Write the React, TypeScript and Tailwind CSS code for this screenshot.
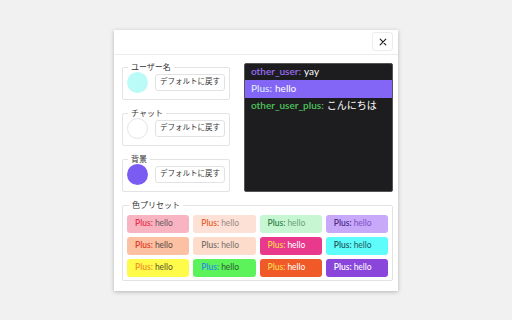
import React from 'react';

const presets = [
  { bg: 'bg-[#f8b4c0]', name: 'text-[#e8304f]', msg: 'text-[#6b5560]' },
  { bg: 'bg-[#fde0d6]', name: 'text-[#e8602c]', msg: 'text-[#9a8a86]' },
  { bg: 'bg-[#c7f7d2]', name: 'text-[#2f7f49]', msg: 'text-[#6ba27e]' },
  { bg: 'bg-[#c8a8f8]', name: 'text-[#4b2b8a]', msg: 'text-[#7a52c8]' },
  { bg: 'bg-[#fcc0a2]', name: 'text-[#e23a2a]', msg: 'text-[#5b4a44]' },
  { bg: 'bg-[#fddccb]', name: 'text-[#7c706b]', msg: 'text-[#7c706b]' },
  { bg: 'bg-[#e8398d]', name: 'text-[#ffd54a]', msg: 'text-white' },
  { bg: 'bg-[#5ffcfc]', name: 'text-[#1f5a5e]', msg: 'text-[#1f5a5e]' },
  { bg: 'bg-[#fffb4a]', name: 'text-[#f0902c]', msg: 'text-[#5a5330]' },
  { bg: 'bg-[#5cf25a]', name: 'text-[#2c8be0]', msg: 'text-[#2e5a2e]' },
  { bg: 'bg-[#f05a28]', name: 'text-[#ffd54a]', msg: 'text-white' },
  { bg: 'bg-[#8a45db]', name: 'text-white', msg: 'text-white' },
];

const ColorField = ({ label, swatch }: { label: string; swatch: string }) => (
  <fieldset className="border border-[#e3e3e3] rounded-[2px] px-[4px] pb-[6px]">
    <legend className="px-[3px] ml-[1px] text-[8px] leading-[9px] text-[#333]">{label}</legend>
    <div className="flex items-center gap-[7px]">
      <div className={`w-[21px] h-[21px] rounded-full ${swatch}`} />
      <button className="whitespace-nowrap border border-[#e2e2e2] rounded-[3px] bg-white px-[4px] h-[17px] text-[7.5px] text-[#333] leading-none">
        デフォルトに戻す
      </button>
    </div>
  </fieldset>
);

export default function App() {
  return (
    <div
      className="w-[512px] h-[320px] bg-[#f1f1f1] flex items-center justify-center"
      style={{ fontFamily: 'Lato, "Noto Sans CJK JP", sans-serif' }}
    >
      <div className="w-[284px] h-[261px] bg-white shadow-[0_1px_4px_rgba(0,0,0,0.25)] flex flex-col">
        <div className="h-[25px] border-b border-[#ececec] flex items-center justify-end pr-[5px]">
          <button className="w-[21px] h-[19px] border border-[#ececec] rounded-[3px] flex items-center justify-center text-[#222]">
            <svg width="8" height="8" viewBox="0 0 10 10" stroke="currentColor" strokeWidth="1.5" strokeLinecap="round">
              <path d="M1.5 1.5 L8.5 8.5 M8.5 1.5 L1.5 8.5" />
            </svg>
          </button>
        </div>
        <div className="pl-[8px] pr-[5px] pt-[8px] flex flex-col gap-[9px]">
          <div className="flex gap-[16px]">
            <div className="w-[106px] flex flex-col gap-[9px]">
              <ColorField label="ユーザー名" swatch="bg-[#bafbf7]" />
              <ColorField label="チャット" swatch="bg-white border border-[#e4e4e4]" />
              <ColorField label="背景" swatch="bg-[#7b5cf2]" />
            </div>
            <div className="flex-1 h-[129px] bg-[#1d1d1f] border border-[#555] rounded-[2px] text-[10px] font-semibold">
              <div className="h-[16px] px-[6px] flex items-center">
                <span className="text-[#9b6cf3]">other_user:</span>
                <span className="text-white ml-[3px] font-normal">yay</span>
              </div>
              <div className="h-[18px] px-[6px] flex items-center bg-[#8366f6]">
                <span className="text-[#d6e2ff]">Plus:</span>
                <span className="text-white ml-[3px] font-normal">hello</span>
              </div>
              <div className="h-[16px] px-[6px] flex items-center">
                <span className="text-[#4ec45c]">other_user_plus:</span>
                <span className="text-white ml-[3px] font-normal">こんにちは</span>
              </div>
            </div>
          </div>
          <fieldset className="border border-[#e3e3e3] rounded-[2px] px-[4px] pb-[3px]">
            <legend className="px-[3px] ml-[2px] text-[8px] leading-[9px] text-[#333]">色プリセット</legend>
            <div className="grid grid-cols-4 gap-x-[4px] gap-y-[4px] pt-[5px]">
              {presets.map((p, i) => (
                <div key={i} className={`h-[18px] rounded-[3px] ${p.bg} flex items-center pl-[8px] text-[8.5px]`}>
                  <span className={`font-semibold ${p.name}`}>Plus:</span>
                  <span className={`ml-[2px] ${p.msg}`}>hello</span>
                </div>
              ))}
            </div>
          </fieldset>
        </div>
      </div>
    </div>
  );
}
